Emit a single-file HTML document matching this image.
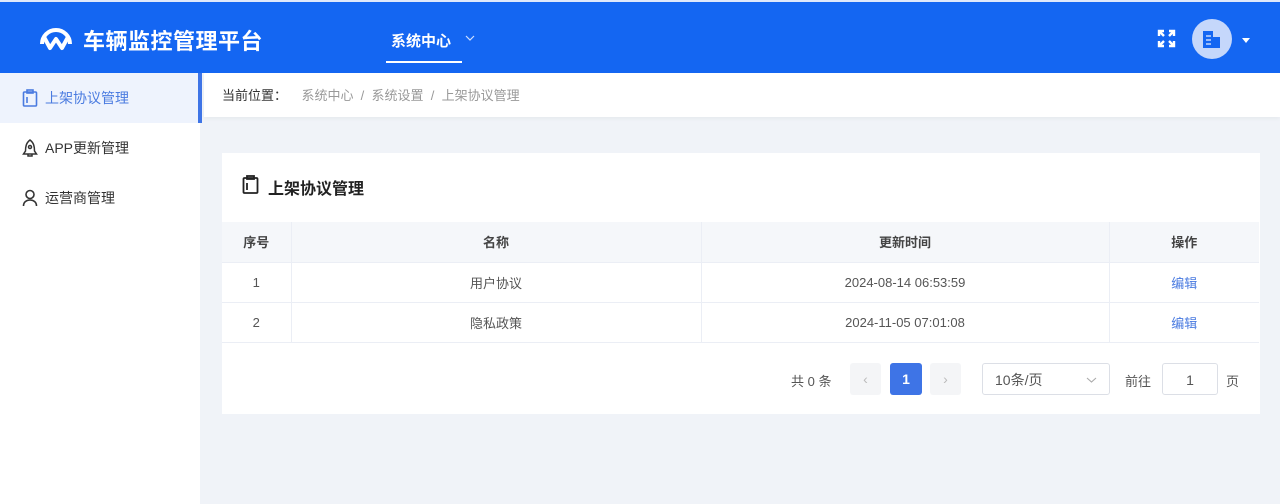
<!DOCTYPE html>
<html><head><meta charset="utf-8"><style>
*{box-sizing:border-box;margin:0;padding:0}
body{width:1280px;height:504px;overflow:hidden;font-family:"Liberation Sans","Noto Sans CJK SC",sans-serif;background:#f0f3f8;position:relative;font-size:14px;color:#333}
.hd{position:absolute;left:0;top:0;width:1280px;height:73px;background:#1466f2;border-top:2px solid #dfe8fb}
.logo{position:absolute;left:38px;top:20px}
.title{position:absolute;left:83px;top:22px;color:#fff;font-size:22px;font-weight:bold;letter-spacing:0.5px}
.nav{position:absolute;left:391px;top:28px;color:#fff;font-size:15px;font-weight:bold}
.nav .ul{position:absolute;left:-5px;top:31px;width:76px;height:2px;background:#fff}
.side{position:absolute;left:0;top:73px;width:200px;height:431px;background:#fff}
.it{height:50px;line-height:50px;padding-left:45px;font-size:14px;color:#333;position:relative}
.it.a{background:#eef3fd;color:#4a7be0;border-right:4px solid #3e74e6;width:202px}
.it svg{position:absolute;left:22px;top:16px}
.bc{position:absolute;left:204px;top:73px;width:1076px;height:44px;background:#fff;line-height:46px;padding-left:18px;font-size:13px;color:#333;box-shadow:0 2px 4px rgba(0,0,0,.04)}
.bc span{color:#999}
.card{position:absolute;left:222px;top:153px;width:1038px;height:261px;background:#fff}
.ct{position:absolute;left:20px;top:22px;font-size:16px;font-weight:bold;color:#222;padding-left:26px}
.ct svg{position:absolute;left:0;top:0}
table{position:absolute;left:0;top:69px;width:1037px;border-collapse:collapse;font-size:13px}
td,th{height:40px;text-align:center;border-bottom:1px solid #ebeef5;border-right:1px solid #ebeef5;color:#555;font-weight:normal}
th{background:#f5f7fa;color:#444;font-weight:bold}
td:last-child,th:last-child{border-right:none}
.lk{color:#4a7be0}
.pg{position:absolute;top:210px;font-size:13px;color:#555}
.box{position:absolute;height:32px;border-radius:3px;text-align:center;line-height:32px}
</style></head><body>
<div class="hd">
<svg class="logo" width="36" height="30" viewBox="0 0 36 30"><path d="M4 22 A14 14 0 0 1 32 22" stroke="#fff" stroke-width="4" fill="none"/><path d="M6 15 L12 26 L18 17 L24 26 L30 15" stroke="#fff" stroke-width="4" fill="none" stroke-linejoin="round"/></svg>
<div class="title">车辆监控管理平台</div>
<div class="nav">系统中心<svg style="position:absolute;left:74px;top:5px" width="10" height="6" viewBox="0 0 10 6" fill="none" stroke="#cfe0ff" stroke-width="1.2"><path d="M1 1l4 4 4-4"/></svg><div class="ul"></div></div>
<svg style="position:absolute;left:1157px;top:27px" width="19" height="19" viewBox="0 0 19 19" stroke="#fff" stroke-width="2.4" fill="none"><path d="M2 7V2h5M2 2l5 5M17 7V2h-5M17 2l-5 5M2 12v5h5M2 17l5-5M17 12v5h-5M17 17l-5-5"/></svg>
<div style="position:absolute;left:1192px;top:17px;width:40px;height:40px;border-radius:50%;background:#c5d7fb"></div>
<svg style="position:absolute;left:1201px;top:26px" width="22" height="22" viewBox="0 0 22 22"><path d="M2 3h10v17H2z" fill="#1466f2"/><path d="M12 9h7v11h-7z" fill="#1466f2"/><path d="M5 8h5M5 12h5M5 16h5" stroke="#c5d7fb" stroke-width="1.5"/></svg>
<div style="position:absolute;left:1242px;top:36px;border:4px solid transparent;border-top:5px solid #fff"></div>
</div>
<div class="side">
<div class="it a"><svg width="16" height="18" viewBox="0 0 16 18" fill="none" stroke="#4a7be0" stroke-width="1.6"><rect x="1.5" y="3" width="13" height="14" rx="1"/><rect x="5" y="1" width="6" height="3"/><path d="M5 8v6"/></svg>上架协议管理</div>
<div class="it"><svg width="16" height="18" viewBox="0 0 16 18" fill="none" stroke="#333" stroke-width="1.5"><path d="M8 1C4 4 3.5 8 3.5 12L1.5 15h13l-2-3C12.5 8 12 4 8 1z"/><circle cx="8" cy="8" r="1.5"/><path d="M6 15v2h4v-2"/></svg>APP更新管理</div>
<div class="it"><svg width="16" height="18" viewBox="0 0 16 18" fill="none" stroke="#333" stroke-width="1.6"><circle cx="8" cy="5.5" r="4"/><path d="M1.5 17c0-4 3-6 6.5-6s6.5 2 6.5 6"/></svg>运营商管理</div>
</div>
<div class="bc">当前位置：&nbsp;&nbsp;&nbsp;&nbsp;<span>系统中心 &nbsp;/&nbsp; 系统设置 &nbsp;/&nbsp; 上架协议管理</span></div>
<div class="card">
<div class="ct"><svg width="17" height="19" viewBox="0 0 17 19" fill="none" stroke="#222" stroke-width="1.8"><rect x="1.5" y="3" width="14" height="15" rx="1"/><rect x="5" y="1" width="7" height="3"/><path d="M5 8v7"/></svg>上架协议管理</div>
<table>
<tr><th style="width:69px">序号</th><th style="width:410px">名称</th><th style="width:408px">更新时间</th><th>操作</th></tr>
<tr><td>1</td><td>用户协议</td><td>2024-08-14 06:53:59</td><td class="lk">编辑</td></tr>
<tr><td>2</td><td>隐私政策</td><td>2024-11-05 07:01:08</td><td class="lk">编辑</td></tr>
</table>
<div class="pg" style="left:569px;top:218px">共 0 条</div>
<div class="box" style="left:628px;top:210px;width:31px;background:#f4f5f7;color:#bbb">‹</div>
<div class="box" style="left:668px;top:210px;width:32px;background:#3e74e6;color:#fff;font-weight:bold">1</div>
<div class="box" style="left:708px;top:210px;width:31px;background:#f4f5f7;color:#bbb">›</div>
<div class="box" style="left:760px;top:210px;width:128px;border:1px solid #dcdfe6;text-align:left;padding-left:12px;color:#555">10条/页<svg style="position:absolute;right:12px;top:13px" width="11" height="6" viewBox="0 0 11 6" fill="none" stroke="#aaa" stroke-width="1.1"><path d="M1 1l4.5 4 4.5-4"/></svg></div>
<div class="pg" style="left:903px;top:218px">前往</div>
<div class="box" style="left:940px;top:210px;width:56px;border:1px solid #dcdfe6;color:#555">1</div>
<div class="pg" style="left:1004px;top:218px">页</div>
</div>
</body></html>
